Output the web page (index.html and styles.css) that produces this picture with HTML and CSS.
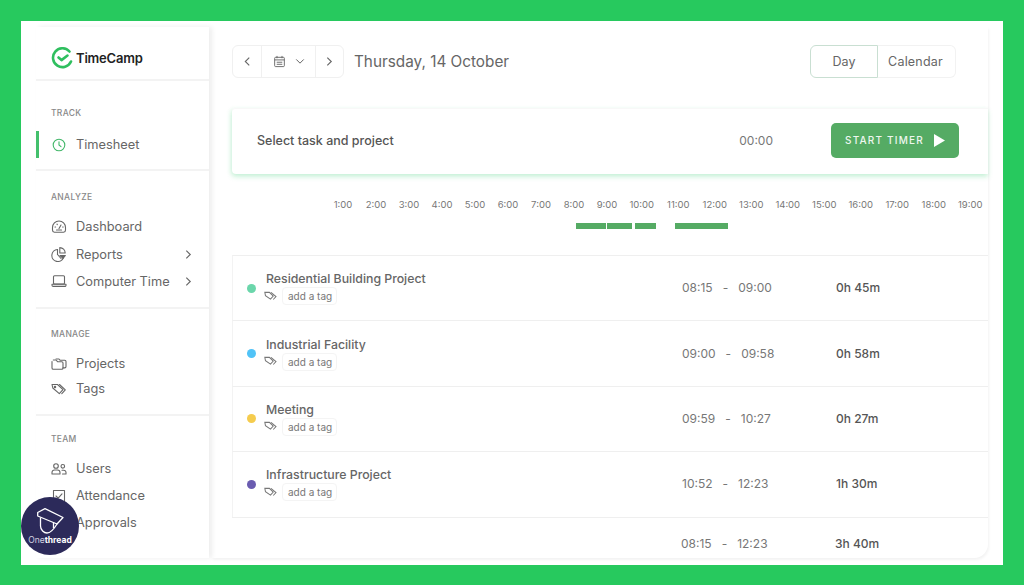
FILE: index.html
```html
<!DOCTYPE html>
<html lang="en">
<head>
    <meta charset="UTF-8">
    <title>TimeCamp</title>
    <link rel="stylesheet" href="styles.css">
</head>
<body>
    <div class="panel">
        <aside class="sidebar">
            <div class="logo">
                <svg width="22" height="22" viewBox="0 0 22 22" fill="none" stroke="#2fbf5f" stroke-width="2.6" stroke-linecap="round" stroke-linejoin="round">
                    <path d="M18.500 4.500A9.400 9.400 0 1 0 20 14.500"/>
                    <path d="M7.500 10.500l3 2.600 6-4.600"/>
                </svg>
                <span>TimeCamp</span>
            </div>
            <section class="nav-group group-track">
                <h4>Track</h4>
                <a class="nav-item active">
                    <svg class="ico ico-green" viewBox="0 0 16 16"><circle cx="8" cy="8" r="5.800"/><path d="M8 4.800V8l2 1.600"/></svg>
                    Timesheet
                </a>
            </section>
            <section class="nav-group group-analyze">
                <h4>Analyze</h4>
                <a class="nav-item">
                    <svg class="ico" viewBox="0 0 16 16"><path d="M3.500 13.200h9a2.300 2.300 0 0 0 2-2.300V8.500a6.500 6.500 0 0 0-13 0v2.400a2.300 2.300 0 0 0 2 2.300z"/><path d="M8 9.500l2-3.500M4 8h.6M11.600 8h.6M6 5.200l.3.4"/><path d="M5.500 11h5"/></svg>
                    Dashboard
                </a>
                <a class="nav-item">
                    <svg class="ico" viewBox="0 0 16 16"><path d="M6.500 3.500a6 6 0 1 0 6 8"/><path d="M6.500 8.500V3.500M8.800 1.600a5.500 5.500 0 0 1 5.400 5.400H8.800z"/><path d="M9 9.500h5.400l-2.400 2.800z" class="ico-fill"/><path d="M6.500 8.500l3.500 4"/></svg>
                    Reports
                    <svg class="chev" viewBox="0 0 8 12"><path d="M1.500 1.500 6 6l-4.500 4.500"/></svg>
                </a>
                <a class="nav-item">
                    <svg class="ico" viewBox="0 0 16 16"><rect x="2.500" y="2.800" width="11" height="8.200" rx="1"/><path d="M1 11.200h14v1a1.200 1.200 0 0 1-1.200 1.200H2.200A1.200 1.200 0 0 1 1 12.200z"/></svg>
                    Computer Time
                    <svg class="chev" viewBox="0 0 8 12"><path d="M1.500 1.500 6 6l-4.500 4.500"/></svg>
                </a>
            </section>
            <section class="nav-group group-manage">
                <h4>Manage</h4>
                <a class="nav-item tight">
                    <svg class="ico" viewBox="0 0 16 16"><path d="M1 5.500V12a1.300 1.300 0 0 0 1.300 1.300h8.400A1.300 1.300 0 0 0 12 12V7a1.300 1.300 0 0 0-1.300-1.300H6.500L5 4H2.300"/><path d="M5 3h3l1.200 1.300h4.500A1.300 1.300 0 0 1 15 5.600v5a1.300 1.300 0 0 1-1.300 1.300H12"/></svg>
                    Projects
                </a>
                <a class="nav-item tight">
                    <svg class="ico" viewBox="0 0 16 16"><path d="M1 3.500h5.500L12 8.600l-3.700 4L1.800 7z"/><path d="M8.500 3.500l5.800 5.400-3.500 3.700"/><circle cx="4" cy="6" r=".7"/></svg>
                    Tags
                </a>
            </section>
            <section class="nav-group group-team">
                <h4>Team</h4>
                <a class="nav-item">
                    <svg class="ico" viewBox="0 0 16 16"><circle cx="5" cy="5" r="2.300"/><circle cx="11.800" cy="5.300" r="1.800"/><path d="M1 13v-1.500A2.500 2.500 0 0 1 3.500 9h3A2.500 2.500 0 0 1 9 11.500V13zM11 9.300h1.700a2.300 2.300 0 0 1 2.300 2.300V13h-3.500"/></svg>
                    Users
                </a>
                <a class="nav-item">
                    <svg class="ico" viewBox="0 0 16 16"><rect x="2.500" y="2.500" width="11" height="11"/><path d="M5 8l2.200 2.200L11 5.800"/></svg>
                    Attendance
                </a>
                <a class="nav-item">
                    <svg class="ico" viewBox="0 0 16 16"><circle cx="8" cy="8" r="5.800"/></svg>
                    Approvals
                </a>
            </section>
        </aside>

        <main class="content">
            <div class="toolbar">
                <div class="date-nav">
                    <button class="nav-btn">
                        <svg class="chev" viewBox="0 0 8 12"><path d="M6 1.500 1.500 6 6 10.500"/></svg>
                    </button>
                    <button class="nav-btn cal-btn">
                        <svg class="cal" viewBox="0 0 14 14"><rect x="1.800" y="2.500" width="10.400" height="10" rx="1"/><path d="M1.800 5.300h10.400M4.300 1v2.500M9.700 1v2.500M4 7.800h6M4 10h6"/></svg>
                        <svg class="chev-down" viewBox="0 0 12 8"><path d="M1.500 1.500 6 6l4.500-4.500"/></svg>
                    </button>
                    <button class="nav-btn">
                        <svg class="chev" viewBox="0 0 8 12"><path d="M1.500 1.500 6 6l-4.500 4.500"/></svg>
                    </button>
                </div>
                <h2 class="date">Thursday, 14 October</h2>
                <div class="view-switch">
                    <span class="view-day">Day</span>
                    <span class="view-cal">Calendar</span>
                </div>
            </div>

            <div class="timer-card">
                <span class="timer-task">Select task and project</span>
                <span class="timer-time">00:00</span>
                <button class="start-btn">
                    START TIMER
                    <svg width="11" height="13" viewBox="0 0 11 13"><path d="M0 0l11 6.500L0 13z" fill="#fff"/></svg>
                </button>
            </div>

            <div class="timeline">
                <div class="hours">
                    <span>1:00</span><span>2:00</span><span>3:00</span><span>4:00</span><span>5:00</span><span>6:00</span><span>7:00</span><span>8:00</span><span>9:00</span><span class="wide">10:00</span><span class="wide">11:00</span><span class="wide">12:00</span><span class="wide">13:00</span><span class="wide">14:00</span><span class="wide">15:00</span><span class="wide">16:00</span><span class="wide">17:00</span><span class="wide">18:00</span><span class="wide">19:00</span>
                </div>
                <div class="bars">
                    <i class="bar bar-a"></i><i class="bar bar-b"></i><i class="bar bar-c"></i><i class="bar bar-d"></i>
                </div>
            </div>

            <div class="entries">
                <div class="entry">
                    <div class="entry-main">
                        <i class="dot dot-teal"></i>
                        <div>
                            <div class="entry-name">Residential Building Project</div>
                            <div class="entry-tag">
                                <svg class="tag-ico" viewBox="0 0 14 12"><path d="M.8 1.500h5l4.200 4.100-3 3.300L1.500 5z"/><path d="M7.500 1.500l5.500 4.600-3 3.200"/></svg>
                                <span class="tag-chip">add a tag</span>
                            </div>
                        </div>
                    </div>
                    <div class="entry-range"><span>08:15</span><span>-</span><span>09:00</span></div>
                    <div class="entry-total">0h 45m</div>
                </div>
                <div class="entry">
                    <div class="entry-main">
                        <i class="dot dot-blue"></i>
                        <div>
                            <div class="entry-name">Industrial Facility</div>
                            <div class="entry-tag">
                                <svg class="tag-ico" viewBox="0 0 14 12"><path d="M.8 1.500h5l4.200 4.100-3 3.300L1.500 5z"/><path d="M7.500 1.500l5.500 4.600-3 3.200"/></svg>
                                <span class="tag-chip">add a tag</span>
                            </div>
                        </div>
                    </div>
                    <div class="entry-range"><span>09:00</span><span>-</span><span>09:58</span></div>
                    <div class="entry-total">0h 58m</div>
                </div>
                <div class="entry">
                    <div class="entry-main">
                        <i class="dot dot-yellow"></i>
                        <div>
                            <div class="entry-name">Meeting</div>
                            <div class="entry-tag">
                                <svg class="tag-ico" viewBox="0 0 14 12"><path d="M.8 1.500h5l4.200 4.100-3 3.300L1.500 5z"/><path d="M7.500 1.500l5.500 4.600-3 3.200"/></svg>
                                <span class="tag-chip">add a tag</span>
                            </div>
                        </div>
                    </div>
                    <div class="entry-range"><span>09:59</span><span>-</span><span>10:27</span></div>
                    <div class="entry-total">0h 27m</div>
                </div>
                <div class="entry">
                    <div class="entry-main">
                        <i class="dot dot-purple"></i>
                        <div>
                            <div class="entry-name">Infrastructure Project</div>
                            <div class="entry-tag">
                                <svg class="tag-ico" viewBox="0 0 14 12"><path d="M.8 1.500h5l4.200 4.100-3 3.300L1.500 5z"/><path d="M7.500 1.500l5.500 4.600-3 3.200"/></svg>
                                <span class="tag-chip">add a tag</span>
                            </div>
                        </div>
                    </div>
                    <div class="entry-range"><span>10:52</span><span>-</span><span>12:23</span></div>
                    <div class="entry-total">1h 30m</div>
                </div>
                <div class="entry entry-sum">
                    <div class="entry-main"></div>
                    <div class="entry-range"><span>08:15</span><span>-</span><span>12:23</span></div>
                    <div class="entry-total">3h 40m</div>
                </div>
            </div>
        </main>

        <div class="badge">
            <svg width="27" height="26" viewBox="0 0 27 26" fill="none" stroke="#fff" stroke-width="1.300" stroke-linejoin="round">
                <path d="M.7 4.500 8 .7 26 9.500 20 16 .7 8z"/>
                <path d="M3.500 9.500V18c0 4 3.500 7 6.500 7 3.500 0 7-4 10-9"/>
                <path d="M16.500 14v6"/>
            </svg>
            <span class="badge-name">One<b>thread</b></span>
        </div>
    </div>
</body>
</html>
```

FILE: styles.css
```css
* {
    box-sizing: border-box;
}
html, body {
    margin: 0;
    padding: 0;
}
body {
    width: 1024px;
    height: 585px;
    overflow: hidden;
    background: #27c95e;
    padding: 21px;
    font-family: Inter, "Open Sans", sans-serif;
    color: #666;
}
.panel {
    position: relative;
    width: 982px;
    height: 544px;
    background: #fff;
    padding: 6px 15px 7px 15px;
    display: flex;
    gap: 3px;
}

/* sidebar */
.sidebar {
    width: 173px;
    flex: none;
    display: flex;
    flex-direction: column;
    box-shadow: 3px 0 5px rgba(0,0,0,0.07);
}
.logo {
    height: 54px;
    padding: 9px 0 0 15px;
    display: flex;
    align-items: center;
    gap: 3px;
    border-bottom: 2px solid #f3f3f3;
}
.logo span {
    font-size: 13px;
    font-weight: 600;
    color: #222;
    letter-spacing: -0.2px;
}
.nav-group {
    border-bottom: 2px solid #f3f3f3;
}
.nav-group h4 {
    margin: 0;
    padding-left: 15px;
    font-size: 8.500px;
    line-height: 11px;
    font-weight: 500;
    letter-spacing: 0.3px;
    text-transform: uppercase;
    color: #888;
}
.group-track {
    height: 90px;
    padding-top: 27px;
}
.group-track h4 {
    margin-bottom: 12px;
}
.group-analyze {
    height: 138px;
    padding-top: 21px;
}
.group-analyze h4 {
    margin-bottom: 10px;
}
.group-manage {
    height: 107px;
    padding-top: 20px;
}
.group-manage h4 {
    margin-bottom: 11px;
}
.group-team {
    flex: 1;
    padding-top: 18px;
    border-bottom: none;
}
.group-team h4 {
    margin-bottom: 10px;
}
.group-team .nav-item {
    height: 27px;
}
.nav-item {
    height: 27.400px;
    padding: 0 17px 0 15px;
    display: flex;
    align-items: center;
    gap: 10px;
    font-size: 12.800px;
    color: #666;
}
.nav-item.tight {
    height: 25px;
}
.nav-item.active {
    height: 27px;
    box-shadow: inset 3px 0 0 #43c06c;
}
.ico {
    width: 16px;
    height: 16px;
    margin-right: -1px;
    flex: none;
    fill: none;
    stroke: #666;
    stroke-width: 1.100;
    stroke-linecap: round;
    stroke-linejoin: round;
}
.ico-green {
    stroke: #43b76a;
}
.ico-fill {
    fill: #666;
}
.chev {
    width: 7px;
    height: 11px;
    fill: none;
    stroke: #666;
    stroke-width: 1.300;
}
.nav-item .chev {
    margin-left: auto;
}

/* main column */
.content {
    flex: 1;
    min-width: 0;
    padding: 18px 0 0 20px;
    border-radius: 0 0 14px 0;
    box-shadow: 1px 2px 3px rgba(0,0,0,0.05);
    display: flex;
    flex-direction: column;
}
.toolbar {
    height: 33px;
    display: flex;
    align-items: center;
    padding-right: 32px;
}
.date-nav {
    display: flex;
    height: 33px;
    width: 112px;
    border: 1px solid #f0f0f0;
    border-radius: 6px;
}
.nav-btn {
    width: 28px;
    padding: 0;
    background: none;
    border: none;
    border-left: 1px solid #f0f0f0;
    display: flex;
    align-items: center;
    justify-content: center;
}
.nav-btn:first-child {
    border-left: none;
}
.cal-btn {
    width: 54px;
    gap: 9px;
}
.cal {
    width: 13px;
    height: 13px;
    fill: none;
    stroke: #666;
    stroke-width: 1;
}
.chev-down {
    width: 10px;
    height: 7px;
    fill: none;
    stroke: #666;
    stroke-width: 1.200;
}
.date {
    margin: 0 0 0 10px;
    font-size: 15.300px;
    font-weight: 400;
    color: #666;
}
.view-switch {
    margin-left: auto;
    display: flex;
    height: 33px;
    font-size: 12.500px;
    color: #666;
}
.view-switch span {
    display: flex;
    align-items: center;
    justify-content: center;
}
.view-day {
    width: 68px;
    border: 1px solid #c9dfd2;
    border-radius: 6px 0 0 6px;
}
.view-cal {
    width: 78px;
    padding-right: 2px;
    border: 1px solid #f2f2f2;
    border-left: none;
    border-radius: 0 6px 6px 0;
    letter-spacing: 0.2px;
}
.timer-card {
    height: 66px;
    margin-top: 30px;
    padding: 0 29px 3px 25px;
    display: flex;
    align-items: center;
    border-top: 1px solid #f8f8f8;
    border-radius: 4px 0 0 4px;
    box-shadow: 0 3px 5px rgba(80,210,130,0.25), -2px 1px 4px rgba(80,210,130,0.12);
    font-size: 12.500px;
}
.timer-task {
    font-weight: 500;
    color: #555;
}
.timer-time {
    margin-left: auto;
    margin-right: 58px;
    font-size: 12px;
    color: #777;
}
.start-btn {
    width: 128px;
    height: 35px;
    border: none;
    border-radius: 5px;
    background: #55ab64;
    color: #eef7ef;
    font-family: inherit;
    font-size: 10px;
    font-weight: 500;
    letter-spacing: 1.200px;
    display: flex;
    align-items: center;
    justify-content: center;
    gap: 10px;
}
.timeline {
    height: 81px;
    padding: 24px 0 0 94.500px;
}
.hours {
    display: flex;
    font-size: 9.500px;
    line-height: 14px;
    color: #777;
}
.hours span {
    width: 33px;
    flex: none;
    text-align: center;
}
.hours .wide {
    width: 36.500px;
}
.bars {
    display: flex;
    margin-top: 11px;
    padding-left: 249.500px;
}
.bar {
    height: 6px;
    background: #55ab64;
}
.bar-a {
    width: 30px;
}
.bar-b {
    width: 25px;
    margin-left: 1px;
}
.bar-c {
    width: 21px;
    margin-left: 3px;
}
.bar-d {
    width: 53px;
    margin-left: 19px;
}
.entries {
    flex: 1;
    display: flex;
    flex-direction: column;
}
.entry {
    height: 65.400px;
    flex: none;
    display: grid;
    grid-template-columns: 449px 154px 1fr;
    align-items: center;
    border-top: 1px solid #efefef;
    border-left: 1px solid #f3f3f3;
}
.entry-main {
    display: flex;
    align-items: center;
    gap: 10px;
    padding-left: 14px;
}
.dot {
    width: 9px;
    height: 9px;
    flex: none;
    border-radius: 50%;
}
.dot-teal {
    background: #6bd6ab;
}
.dot-blue {
    background: #51c3f7;
}
.dot-yellow {
    background: #f5cc4e;
}
.dot-purple {
    background: #6a5cb0;
}
.entry-name {
    font-size: 12.300px;
    line-height: 16px;
    font-weight: 500;
    color: #666;
}
.entry-tag {
    display: flex;
    align-items: center;
    gap: 5px;
    margin: 0 0 0 -2px;
}
.tag-ico {
    width: 13px;
    height: 11px;
    flex: none;
    fill: none;
    stroke: #777;
    stroke-width: 1.100;
}
.tag-chip {
    width: 55px;
    height: 18px;
    padding: 0 5px;
    display: flex;
    align-items: center;
    border: 1px solid #f4f4f4;
    border-radius: 4px;
    font-size: 10px;
    white-space: nowrap;
    color: #777;
}
.entry-range {
    display: flex;
    gap: 10px;
    margin-top: -1px;
    font-size: 12px;
    color: #777;
}
.entry-total {
    margin-top: -1px;
    font-size: 12px;
    font-weight: 500;
    color: #555;
}
.entry-sum {
    flex: 1;
    height: auto;
    padding-top: 12px;
    border-left: none;
}

/* watermark over the sidebar */
.badge {
    position: absolute;
    left: 0;
    top: 476px;
    width: 58px;
    height: 58px;
    border-radius: 50%;
    background: #2c2a5a;
    display: flex;
    flex-direction: column;
    align-items: center;
    padding-top: 11px;
    color: #fff;
}
.badge-name {
    margin-top: 1px;
    font-size: 8.500px;
    line-height: 10px;
    color: #d0d0e0;
}
.badge-name b {
    font-weight: 700;
    color: #fff;
}
```
